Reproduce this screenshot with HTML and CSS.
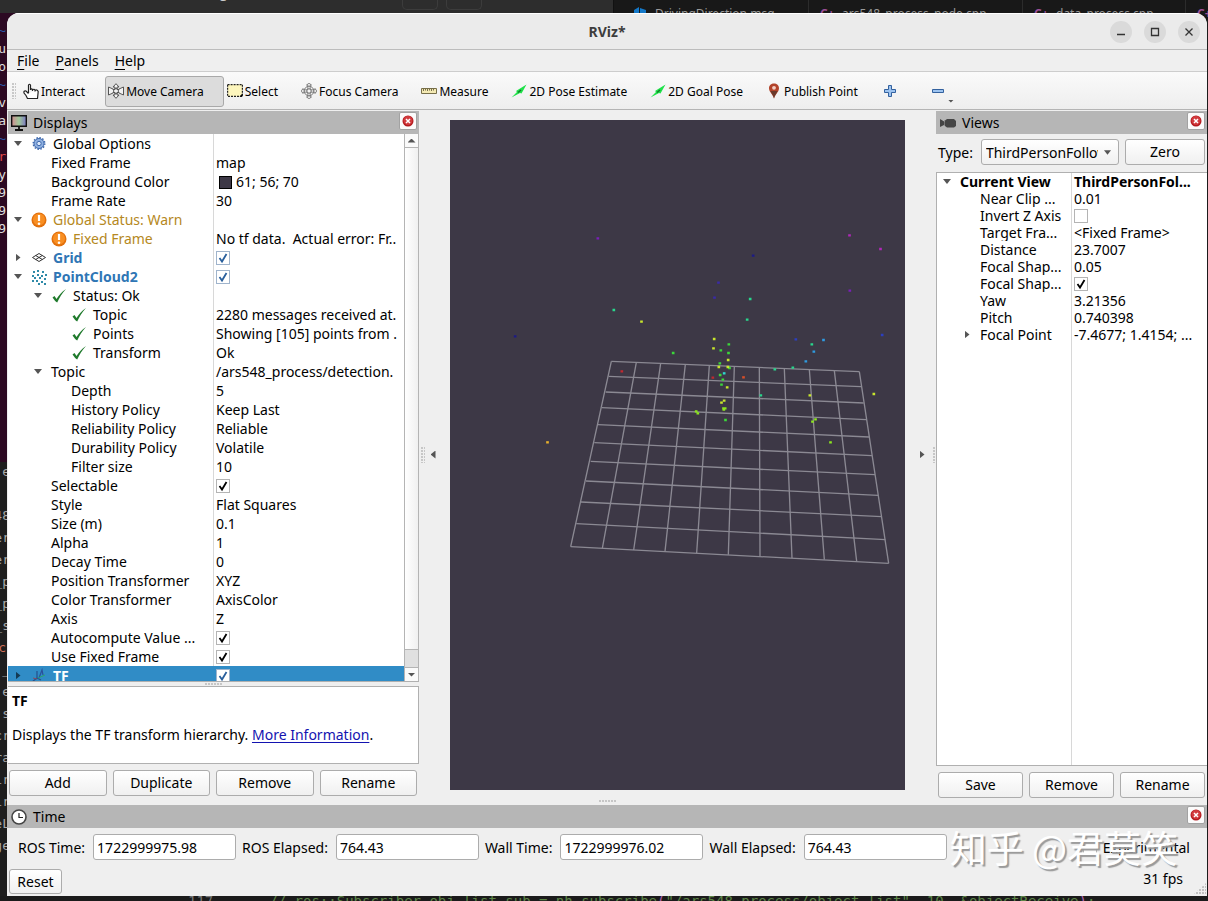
FILE: index.html
```html
<!DOCTYPE html>
<html lang="en">
<head>
<meta charset="utf-8">
<title>RViz*</title>
<link rel="stylesheet" href="styles.css">
</head>
<body>
<svg class="defs" aria-hidden="true">
  <symbol id="i-check" viewBox="0 0 16 16"><path d="M1.500 9.500 3.500 8l2 3C8 7 10.500 4 15 1 11 5.500 8.500 9.500 6.200 14.500 4.500 14 3.500 12 1.500 9.500Z" fill="#1f7a2c"/></symbol>
  <symbol id="i-warn" viewBox="0 0 16 16"><circle cx="8" cy="8" r="7.500" fill="#e2700c"/><circle cx="8" cy="7.500" r="6" fill="#f88e22"/><path d="M8 3v6" stroke="#fff" stroke-width="2.200"/><circle cx="8" cy="11.800" r="1.300" fill="#fff"/></symbol>
  <symbol id="i-x" viewBox="0 0 12 12"><circle cx="6" cy="6" r="5.500" fill="#b3181c"/><circle cx="6" cy="5.500" r="4.500" fill="#d23b3e"/><path d="m4 4 4 4M8 4 4 8" stroke="#fff" stroke-width="1.500"/></symbol>
  <symbol id="i-arrow" viewBox="0 0 16 16"><path d="M.5 14.500 6 9 5 8 15.500 1.500 10.500 10.500 9 10 .5 14.500Z" fill="#1fe24a"/><path d="M7 9.500 10 7" stroke="#137a26" stroke-width="1.500"/></symbol>
</svg>
<div class="desktop">
  <div class="behind-top">
    <div class="browser"><span class="at">@</span><span class="chip"></span><span class="chip"></span></div>
    <div class="tab msg"><svg class="tabicon" viewBox="0 0 14 14"><path d="M1 4 6 1v12L1 10ZM7 2l6 2v7l-6 2Z" fill="#1478c8"/></svg>DrivingDirection.msg</div>
    <div class="tab cpp"><b>C+</b>ars548_process_node.cpp</div>
    <div class="tab cpp last"><b>C+</b>data_process.cpp</div>
    <div class="tab cpp"><b>C+</b></div>
  </div>
  <div class="behind-left">
    <div class="term"><i>~</i><span>u</span><span>o</span><i>~</i><span>v</span><span>a</span><i>~</i><em>r</em><span>y</span><span>9</span><span>9</span><span>9</span></div>
    <div class="code"><span>e</span><span></span><span>48</span><span>er</span><span>er</span><span>_p</span><span>_p</span><span>_s</span><em>c</em><span>_</span><span>e</span><span>s</span><span>cr</span><span>ra</span><span>ir</span><span>ir</span><span>eL</span><span>ge</span></div>
  </div>

  <main class="window">
    <header class="titlebar">
      <h1>RViz*</h1>
      <div class="winbtns">
        <button aria-label="Minimize"><svg viewBox="0 0 22 22"><path d="M7 13.500h8"/></svg></button>
        <button aria-label="Maximize"><svg viewBox="0 0 22 22"><path d="M7.500 7.500h7v7h-7z"/></svg></button>
        <button aria-label="Close window"><svg viewBox="0 0 22 22"><path d="m7.500 7.500 7 7m0-7-7 7"/></svg></button>
      </div>
    </header>
    <nav class="menubar"><button><u>F</u>ile</button><button><u>P</u>anels</button><button><u>H</u>elp</button></nav>
    <div class="toolbar">
      <span class="grip tall"></span>
      <button class="tool"><svg viewBox="0 0 16 16"><path d="M5.500 10V2Q6.500.5 7.500 2V7M7.500 6.500Q9 5 9.500 7V8M9.500 7Q11 5.500 12 7V8.500M12 7.500Q14 6 15.200 8.500L14.500 15.500H4.500L3 12.500 1 10Q.5 7.500 3 8L5.500 10.500" fill="#fff" stroke="#222" stroke-width="1.200"/></svg>Interact</button>
      <button class="tool on"><svg viewBox="0 0 16 16"><path d="M8 .7 11 4H9v2.500h2V6l4.500-2v8L11 10v-.5H9V12h2l-3 3.300L5 12h2V9.500H5V10L.5 12V4L5 6v.5h2V4H5Z" fill="#f2f2f2" stroke="#555"/><circle cx="8" cy="8" r="2.500" fill="none" stroke="#555"/></svg>Move Camera</button>
      <button class="tool"><svg viewBox="0 0 16 16"><path d="M.6 1.600h14.800v11.800H.6z" fill="#fdf6bd" stroke="#222" stroke-width="1.200" stroke-dasharray="2 1"/><path d="m15.500 10.500-3 3h3z" fill="#000"/></svg>Select</button>
      <button class="tool"><svg viewBox="0 0 16 16"><g fill="none" stroke="#777"><circle cx="8" cy="8" r="4.800"/><circle cx="8" cy="8" r="2.300"/><path d="M6.800 6.800V2H5.500L8 .3 10.500 2H9.200v4.800H14V5.500L15.700 8 14 10.500V9.200H9.200V14h1.300L8 15.700 5.500 14h1.300V9.200H2v1.300L.3 8 2 5.500v1.300Z" stroke-width=".9"/></g></svg>Focus Camera</button>
      <button class="tool"><svg viewBox="0 0 16 16"><path d="M.5 5.500h15v5H.5z" fill="#f4eab4" stroke="#776f4a"/><path d="M2.500 6v2m2-2v1.500m2-1.500v2m2-2v1.500m2-1.500v2m2-2v1.500" stroke="#554e30" stroke-width=".8"/></svg>Measure</button>
      <button class="tool"><svg viewBox="0 0 16 16"><use href="#i-arrow"/></svg>2D Pose Estimate</button>
      <button class="tool"><svg viewBox="0 0 16 16"><use href="#i-arrow"/></svg>2D Goal Pose</button>
      <button class="tool pin"><svg viewBox="0 0 16 16"><path d="M8 15.500C7 11.500 3 9 3 5.200 3 2.300 5.200.5 8 .5s5 1.800 5 4.700C13 9 9 11.500 8 15.500Z" fill="#b2432a"/><path d="M8 15.500C7.500 12 5 10 4.500 8h7c-.5 2-3 4-3.500 7.500Z" fill="#6b3a2c"/><circle cx="8" cy="4.800" r="1.900" fill="#f3cfc4"/></svg>Publish Point</button>
      <button class="tool icon" aria-label="Add tool"><svg viewBox="0 0 16 16"><path d="M6.500 2.500h3v4h4v3h-4v4h-3v-4h-4v-3h4z" fill="#9cc3f0" stroke="#33619e"/></svg></button>
      <button class="tool icon drop" aria-label="Remove tool"><svg viewBox="0 0 16 16"><path d="M2.500 6.500h11v3h-11z" fill="#9cc3f0" stroke="#33619e"/></svg><span class="dropmark"></span></button>
    </div>

    <div class="workspace">
      <section class="dock displays">
        <h2 class="docktitle"><svg viewBox="0 0 16 16"><defs><linearGradient id="scr"><stop offset="0" stop-color="#d08a90"/><stop offset=".5" stop-color="#9fc99a"/><stop offset="1" stop-color="#7b77c4"/></linearGradient></defs><path d="M.7.7h14.600v10.600H.7z" fill="url(#scr)" stroke="#111" stroke-width="1.400"/><path d="M8 11v3M4 15h8" stroke="#111" stroke-width="1.800"/></svg><span>Displays</span><button class="close" aria-label="Close Displays"><svg viewBox="0 0 12 12"><use href="#i-x"/></svg></button></h2>
        <div class="tree">
          <table class="props">
            <colgroup><col class="name"><col></colgroup>
            <tr><td><div class="cell"><i class="tw open"></i><svg viewBox="0 0 16 16"><circle cx="8" cy="7.500" r="5" fill="#8fb0e0" stroke="#3d68ad"/><circle cx="8" cy="7.500" r="5.800" fill="none" stroke="#3d68ad" stroke-width="1.400" stroke-dasharray="1.500 1.500"/><circle cx="8" cy="7.500" r="2.200" fill="#dbe8fa" stroke="#3d68ad"/></svg>Global Options</div></td><td></td></tr>
            <tr><td><div class="cell d1"><i class="tw"></i>Fixed Frame</div></td><td>map</td></tr>
            <tr><td><div class="cell d1"><i class="tw"></i>Background Color</div></td><td><span class="swatch"></span>61; 56; 70</td></tr>
            <tr><td><div class="cell d1"><i class="tw"></i>Frame Rate</div></td><td>30</td></tr>
            <tr class="warn"><td><div class="cell"><i class="tw open"></i><svg viewBox="0 0 16 16"><use href="#i-warn"/></svg>Global Status: Warn</div></td><td></td></tr>
            <tr class="warn"><td><div class="cell d1"><i class="tw"></i><svg viewBox="0 0 16 16"><use href="#i-warn"/></svg>Fixed Frame</div></td><td>No tf data.&nbsp; Actual error: Fr..</td></tr>
            <tr class="disp"><td><div class="cell"><i class="tw shut"></i><svg viewBox="0 0 16 16"><path d="m1.500 7.500 6.500-4 6.500 4-6.500 4Zm3.200-2 6.600 4m-3.300-6m3.300 2-6.600 4" fill="none" stroke="#333"/></svg><label for="c-grid">Grid</label></div></td><td><input type="checkbox" id="c-grid" class="blue" checked></td></tr>
            <tr class="disp"><td><div class="cell"><i class="tw open"></i><svg viewBox="0 0 16 16"><path d="M2 3h2m2-1h2m3 1h2M1 7h2m3-1h2m2 1h2m2-1h2M3 9h2m3 0h2m3 1h2M1 12h2m2 0h2m3 1h2M7 15h2m4 0h2" stroke="#2f8aa8" stroke-width="2"/></svg><label for="c-pc">PointCloud2</label></div></td><td><input type="checkbox" id="c-pc" class="blue" checked></td></tr>
            <tr><td><div class="cell d1"><i class="tw open"></i><svg viewBox="0 0 16 16"><use href="#i-check"/></svg>Status: Ok</div></td><td></td></tr>
            <tr><td><div class="cell d2"><i class="tw"></i><svg viewBox="0 0 16 16"><use href="#i-check"/></svg>Topic</div></td><td>2280 messages received at.</td></tr>
            <tr><td><div class="cell d2"><i class="tw"></i><svg viewBox="0 0 16 16"><use href="#i-check"/></svg>Points</div></td><td>Showing [105] points from .</td></tr>
            <tr><td><div class="cell d2"><i class="tw"></i><svg viewBox="0 0 16 16"><use href="#i-check"/></svg>Transform</div></td><td>Ok</td></tr>
            <tr><td><div class="cell d1"><i class="tw open"></i>Topic</div></td><td>/ars548_process/detection.</td></tr>
            <tr><td><div class="cell d2"><i class="tw"></i>Depth</div></td><td>5</td></tr>
            <tr><td><div class="cell d2"><i class="tw"></i>History Policy</div></td><td>Keep Last</td></tr>
            <tr><td><div class="cell d2"><i class="tw"></i>Reliability Policy</div></td><td>Reliable</td></tr>
            <tr><td><div class="cell d2"><i class="tw"></i>Durability Policy</div></td><td>Volatile</td></tr>
            <tr><td><div class="cell d2"><i class="tw"></i>Filter size</div></td><td>10</td></tr>
            <tr><td><div class="cell d1"><i class="tw"></i><label for="c-sel">Selectable</label></div></td><td><input type="checkbox" id="c-sel" checked></td></tr>
            <tr><td><div class="cell d1"><i class="tw"></i>Style</div></td><td>Flat Squares</td></tr>
            <tr><td><div class="cell d1"><i class="tw"></i>Size (m)</div></td><td>0.1</td></tr>
            <tr><td><div class="cell d1"><i class="tw"></i>Alpha</div></td><td>1</td></tr>
            <tr><td><div class="cell d1"><i class="tw"></i>Decay Time</div></td><td>0</td></tr>
            <tr><td><div class="cell d1"><i class="tw"></i>Position Transformer</div></td><td>XYZ</td></tr>
            <tr><td><div class="cell d1"><i class="tw"></i>Color Transformer</div></td><td>AxisColor</td></tr>
            <tr><td><div class="cell d1"><i class="tw"></i>Axis</div></td><td>Z</td></tr>
            <tr><td><div class="cell d1"><i class="tw"></i><label for="c-auto">Autocompute Value ...</label></div></td><td><input type="checkbox" id="c-auto" checked></td></tr>
            <tr><td><div class="cell d1"><i class="tw"></i><label for="c-fix">Use Fixed Frame</label></div></td><td><input type="checkbox" id="c-fix" checked></td></tr>
            <tr class="selected"><td><div class="cell"><i class="tw shut"></i><svg viewBox="0 0 16 16"><path d="m1 14 5-4V3M6 10l4 2" stroke="#24508c" fill="none" stroke-width="1.200"/><path d="m8 10 3-8 1 5" stroke="#2a4f9a" fill="none" stroke-width="1.200"/><path d="m7 10 7-3" stroke="#2ba36a"/><path d="m2 10 4 1" stroke="#8a4a5c"/></svg><label for="c-tf">TF</label></div></td><td><input type="checkbox" id="c-tf" class="blue" checked></td></tr>
          </table>
          <div class="scroll"><span class="up"></span><span class="track"></span><span class="rest"></span><span class="down"></span></div>
        </div>
        <div class="splitter"><span class="grip flat"></span></div>
        <div class="about"><b>TF</b><p>Displays the TF transform hierarchy. <a href="#tf">More Information</a>.</p></div>
        <div class="buttons"><button class="btn">Add</button><button class="btn">Duplicate</button><button class="btn">Remove</button><button class="btn">Rename</button></div>
      </section>

      <div class="collapse"><span class="grip"></span><i class="tw left"></i></div>
      <section class="scene" aria-label="3D view">
        <svg viewBox="-150 -300 1365 2010" preserveAspectRatio="xMidYMid meet">
          <g fill="none" stroke="#8b8993" stroke-width="4">
            <path d="M334 424 1078 455M326 469 1083 500M317 516 1091 549M306 563 1099 599M294 614 1107 651M283 668 1116 707M272 724 1125 764M258 783 1134 826M243 846 1145 890M229 911 1156 959M212 980 1166 1030"/>
            <path d="M334 424 212 980M409 427 307 985M482 430 401 990M556 433 495 994M628 436 590 999M703 440 685 1004M778 443 780 1009M853 446 876 1014M928 449 973 1019M1003 452 1070 1024M1078 455 1166 1030"/>
          </g>
          <g fill="none" stroke-width="7" stroke-linecap="square">
            <path stroke="#7a1fb8" d="M293 55h1M1049 212h1"/>
            <path stroke="#b028b8" d="M1048 46h1M1141 87h1"/>
            <path stroke="#1c1a86" d="M759 107h1M45 349h1"/>
            <path stroke="#3a2aa8" d="M655 188h1M643 233h1"/>
            <path stroke="#2c3fc0" d="M887 358h1M1146 345h1"/>
            <path stroke="#28d68c" d="M750 237h1M341 270h1M741 299h1M824 448h1M782 526h1M935 373h1M878 443h1"/>
            <path stroke="#2f9ae0" d="M970 360h1M941 395h1M917 424h1"/>
            <path stroke="#2fd6cc" d="M672 460h1"/>
            <path stroke="#3bd63a" d="M519 399h1M662 391h1M686 373h1M685 399h1M659 430h1M688 444h1M660 465h1M668 479h1M676 600h1M664 494h1"/>
            <path stroke="#c8e62c" d="M424 305h1M642 357h1M640 385h1M684 420h1M656 441h1M681 502h1M672 542h1M664 548h1M929 526h1M1121 522h1M683 441h1"/>
            <path stroke="#8ce61e" d="M588 574h1M593 580h1M670 565h1M675 565h1M671 569h1M937 605h1M946 598h1M991 667h1"/>
            <path stroke="#e8b02c" d="M142 667h1"/>
            <path stroke="#c02830" d="M365 454h1M638 473h1"/>
            <path stroke="#d84e28" d="M730 472h1"/>
          </g>
        </svg>
      </section>
      <div class="collapse right"><i class="tw rightw"></i><span class="grip"></span></div>

      <section class="dock views">
        <h2 class="docktitle"><svg viewBox="0 0 16 16"><path d="M0 4 5 7V5.500L7 4h7l2 2v5l-2 1.500H7L5 11V9.500L0 12Z" fill="#454545"/><path d="M4.500 5v6" stroke="#888" stroke-width=".7"/></svg><span>Views</span><button class="close" aria-label="Close Views"><svg viewBox="0 0 12 12"><use href="#i-x"/></svg></button></h2>
        <div class="typerow"><label for="type">Type:</label><select id="type"><option>ThirdPersonFollower (rviz_default_plugins)</option></select><button class="btn">Zero</button></div>
        <div class="tree">
          <table class="props">
            <colgroup><col class="name"><col></colgroup>
            <tr class="bold"><td><div class="cell"><i class="tw open"></i>Current View</div></td><td>ThirdPersonFol...</td></tr>
            <tr><td><div class="cell d1"><i class="tw"></i>Near Clip ...</div></td><td>0.01</td></tr>
            <tr><td><div class="cell d1"><i class="tw"></i><label for="c-inv">Invert Z Axis</label></div></td><td><input type="checkbox" id="c-inv"></td></tr>
            <tr><td><div class="cell d1"><i class="tw"></i>Target Fra...</div></td><td>&lt;Fixed Frame&gt;</td></tr>
            <tr><td><div class="cell d1"><i class="tw"></i>Distance</div></td><td>23.7007</td></tr>
            <tr><td><div class="cell d1"><i class="tw"></i>Focal Shap...</div></td><td>0.05</td></tr>
            <tr><td><div class="cell d1"><i class="tw"></i><label for="c-foc">Focal Shap...</label></div></td><td><input type="checkbox" id="c-foc" checked></td></tr>
            <tr><td><div class="cell d1"><i class="tw"></i>Yaw</div></td><td>3.21356</td></tr>
            <tr><td><div class="cell d1"><i class="tw"></i>Pitch</div></td><td>0.740398</td></tr>
            <tr><td><div class="cell d1"><i class="tw shut"></i>Focal Point</div></td><td>-7.4677; 1.4154; ...</td></tr>
          </table>
        </div>
        <div class="buttons"><button class="btn">Save</button><button class="btn">Remove</button><button class="btn">Rename</button></div>
      </section>
    </div>

    <div class="splitter big"><span class="grip flat"></span></div>
    <section class="time">
      <h2 class="docktitle"><svg viewBox="0 0 16 16"><circle cx="8" cy="8" r="7" fill="#fff" stroke="#444" stroke-width="1.600"/><path d="M8 4v4.500h4" fill="none" stroke="#222" stroke-width="1.200"/></svg><span>Time</span><button class="close" aria-label="Close Time"><svg viewBox="0 0 12 12"><use href="#i-x"/></svg></button></h2>
      <div class="fields">
        <label for="rt">ROS Time:</label><input type="text" id="rt" value="1722999975.98">
        <label for="re">ROS Elapsed:</label><input type="text" id="re" value="764.43">
        <label for="wt">Wall Time:</label><input type="text" id="wt" value="1722999976.02">
        <label for="we">Wall Elapsed:</label><input type="text" id="we" value="764.43">
        <label class="exp"><input type="checkbox">Experimental</label>
      </div>
      <div class="status"><button class="btn reset">Reset</button><span>31 fps</span></div>
      <span class="sizegrip"></span>
      <div class="watermark">知乎 @君莫笑</div>
    </section>
  </main>
  <div class="behind-bottom"><span class="ln">117</span><span class="cm">// ros::Subscriber obj_list_sub = nh_subscribe<b>(</b>"/ars548_process/object_list"<b>,</b> 10, &amp;objectReceive<b>)</b>;</span></div>
</div>
</body>
</html>
```

FILE: styles.css
```css
* { box-sizing: border-box; }
body { margin: 0; background: #1b1b1b; color: #000; font: 14px/19px "Noto Sans", "Open Sans", sans-serif; }
button, input, select { font: inherit; color: inherit; }
button { padding: 0; border: 0; background: none; }
.defs { display: none; }

.desktop { display: grid; grid-template: 13px minmax(0, 1fr) 5px / 7px minmax(0, 1fr) 1px; height: 100vh; overflow: hidden; background: #1b1b1b; }
.behind-top { grid-area: 1 / 1 / 2 / 4; display: flex; height: 26px; overflow: hidden; background: #181818; color: #9a9a9a; font-size: 12px; }
.browser { display: flex; flex: none; gap: 8px; width: 614px; padding-left: 218px; background: #2d2d2d; border-right: 1px solid #111; }
.browser .at { width: 176px; line-height: 4px; margin-top: -6px; color: #ccc; }
.chip { width: 36px; height: 10px; border: 1px solid #3c3c3c; border-top: 0; border-radius: 0 0 5px 5px; }
.tab { display: flex; flex: none; gap: 8px; width: 214px; padding: 4px 0 0 11px; white-space: nowrap; border-right: 1px solid #2c2c2c; }
.tab.msg { width: 195px; padding-left: 19px; }
.tab.last { width: 163px; }
.tab b { width: 14px; color: #9b4f96; }
.tabicon { width: 14px; height: 14px; margin-top: 2px; }
.behind-left { grid-area: 1 / 1 / 4 / 2; display: flex; flex-direction: column; width: 20px; color: #ddd; font-family: "DejaVu Sans Mono", monospace; font-size: 13px; }
.behind-left span, .behind-left i, .behind-left em { display: flex; justify-content: flex-end; width: 6px; font-style: normal; }
.term { display: grid; grid-auto-rows: 18px; height: 449px; margin-top: 13px; padding-top: 8px; background: #2c0922; }
.term i { color: #2a55a5; }
.term em { color: #e04848; }
.code { flex: 1; display: grid; grid-auto-rows: 22px; background: #1e1e1e; color: #aaa; }
.code span { width: 10px; }
.code em { color: #ce6e58; }
.behind-bottom { grid-area: 3 / 1 / 4 / 4; display: flex; align-items: flex-start; gap: 56px; padding-left: 188px; overflow: hidden; background: #1b1b1b; color: #5c8447; font: 14px/10px "DejaVu Sans Mono", monospace; white-space: pre; }
.behind-bottom .ln { color: #777; }
.behind-bottom b { color: #b060b0; font-weight: 400; }

.window { grid-area: 2 / 2 / 3 / 3; z-index: 1; display: flex; flex-direction: column; min-width: 0; overflow: hidden; border-radius: 12px 12px 0 0; background: #efefef; }
.titlebar { display: grid; grid-template-columns: 1fr auto 1fr; align-items: center; height: 37px; padding: 0 7px; border-top: 1px solid #fff; border-bottom: 1px solid #bcbcbc; background: #ebebeb; }
.titlebar h1 { grid-column: 2; margin: 0; color: #3d3d3d; font-size: 14px; line-height: 19px; }
.winbtns { display: flex; justify-content: flex-end; gap: 12px; }
.winbtns button { width: 22px; height: 22px; border-radius: 50%; background: #dadada; }
.winbtns svg { display: block; fill: none; stroke: #333; stroke-width: 1.3; }
.menubar { display: flex; gap: 16px; height: 22px; padding-left: 10px; border-bottom: 1px solid #cdcdcd; }
.menubar u { text-underline-offset: 3px; }
.toolbar { display: flex; align-items: center; flex: none; height: 38px; padding: 1px 0 0 5px; border-bottom: 1px solid #b4b4b4; background: linear-gradient(#fafafa, #eee); font-size: 12px; }
.tool { display: flex; align-items: center; gap: 2px; height: 31px; padding: 0 20px 0 3px; border: 1px solid transparent; border-left: 0; border-right: 0; white-space: nowrap; }
.tool svg { width: 16px; height: 16px; }
.tool.on { border: 1px solid #a9a9a9; border-radius: 3px; background: #dcdcdc; padding: 0 19px 0 2px; }
.tool.icon { padding: 0 16px 0 4px; }
.tool.drop { padding: 0 0 0 16px; }
.dropmark { align-self: flex-end; width: 6px; height: 3px; margin-bottom: 3px; background: #555; clip-path: polygon(0 0, 100% 0, 50% 100%); }

.grip { width: 4px; height: 16px; background: radial-gradient(circle at 1px 1px, #b8b8b8 0.6px, transparent 1px) 0 0 / 3px 3px; }
.grip.tall { margin-right: 4px; }
.grip.flat { width: 17px; height: 3px; }

.workspace { display: flex; flex: 1; min-height: 0; padding-top: 1px; }
.dock { display: flex; flex-direction: column; min-height: 0; }
.displays { width: 412px; padding-left: 1px; }
.views { width: 271px; }
.docktitle { display: flex; align-items: center; flex: none; height: 23px; margin: 0; padding: 0 2px 0 4px; background: #b6b6b6; font-size: 14px; font-weight: 400; }
.displays .docktitle { padding-left: 3px; }
.docktitle > svg { width: 16px; height: 16px; }
.docktitle span { flex: 1; padding-left: 6px; }
.close { display: grid; place-items: center; align-self: flex-start; width: 18px; height: 18px; margin-top: 1px; border: 1px solid #a2a2a2; border-radius: 2px; background: #fbfbfb; }
.close svg { width: 12px; height: 12px; }

.tree { display: flex; flex: 1; min-height: 0; overflow: hidden; border-bottom: 1px solid #b0b0b0; background: linear-gradient(#d8d8d8, #d8d8d8) 205px 0 / 1px 100% no-repeat #fff; }
.props { flex: 1; width: 0; table-layout: fixed; border-collapse: collapse; align-self: flex-start; }
.props .name { width: 205px; }
.props td { height: 19px; padding: 0; overflow: hidden; white-space: nowrap; line-height: 19px; }
.props td + td { padding-left: 3px; }
.cell { display: flex; align-items: center; height: 19px; }
.cell svg { flex: none; width: 16px; height: 16px; margin-right: 6px; }
.d1 { padding-left: 20px; }
.d2 { padding-left: 40px; }
.tw { flex: none; display: grid; place-items: center; width: 20px; margin-right: 3px; }
.tw::before { width: 8px; height: 8px; background: #555; }
.tw.open::before { content: ""; height: 5px; clip-path: polygon(0 0, 100% 0, 50% 100%); }
.tw.shut::before, .tw.rightw::before { content: ""; width: 5px; clip-path: polygon(0 0, 100% 50%, 0 100%); }
.tw.left::before { content: ""; width: 5px; clip-path: polygon(100% 0, 0 50%, 100% 100%); }
.warn .cell { color: #b58822; }
.disp .cell { color: #2f76b5; font-weight: 700; }
.bold { font-weight: 700; }
.selected { background: #308cc6; }
.selected .cell { color: #fff; font-weight: 700; }
.selected .tw::before { background: #143a54; }
.swatch { display: inline-block; width: 13px; height: 13px; margin: 0 4px 0 3px; border: 1px solid #000; background: #3d3846; vertical-align: -2px; }
input[type=checkbox] { display: block; appearance: none; width: 14px; height: 14px; margin: 0; border: 1px solid #b4b4b4; background: #fff; }
input[type=checkbox]:checked { background: #fff url("data:image/svg+xml,%3Csvg xmlns='http://www.w3.org/2000/svg' viewBox='0 0 12 12'%3E%3Cpath d='M2.500 6 5 9.500 9.500 2' fill='none' stroke='%23000' stroke-width='1.800'/%3E%3C/svg%3E"); }
input.blue:checked { border-color: #a0b4cc; background-image: url("data:image/svg+xml,%3Csvg xmlns='http://www.w3.org/2000/svg' viewBox='0 0 12 12'%3E%3Cpath d='M2.500 6 5 9.500 9.500 2' fill='none' stroke='%23295f9c' stroke-width='1.800'/%3E%3C/svg%3E"); }

.scroll { display: flex; flex-direction: column; width: 15px; border: 1px solid #b4b4b4; border-top: 0; border-bottom: 0; background: #fafafa; }
.up, .down { display: grid; place-items: center; height: 14px; border-bottom: 1px solid #b4b4b4; }
.down { border: 0; border-top: 1px solid #b4b4b4; }
.up::before, .down::before { content: ""; width: 8px; height: 4px; background: #555; clip-path: polygon(50% 0, 100% 100%, 0 100%); }
.down::before { clip-path: polygon(0 0, 100% 0, 50% 100%); }
.track { flex: 1; background: linear-gradient(90deg, #fff, #f0f0f0); }
.rest { height: 18px; border-top: 1px solid #b4b4b4; background: #e0e0e0; }

.splitter { display: grid; place-items: center; flex: none; height: 4px; }
.splitter.big { height: 7px; }
.about { height: 78px; flex: none; padding: 4px; border: 1px solid #b0b0b0; border-left: 0; background: #fff; }
.about p { margin: 15px 0 0; white-space: nowrap; }
.about a { color: #1313b0; text-underline-offset: 2px; }
.buttons { display: flex; gap: 6px; flex: none; padding: 6px 2px 2px 1px; }
.btn { flex: 1; height: 26px; border: 1px solid #acacac; border-radius: 3px; background: linear-gradient(#fff, #f0f0f0); line-height: 24px; }

.collapse { display: flex; align-items: center; gap: 0; width: 31px; padding-left: 2px; }
.collapse .tw { width: 16px; margin: 0; }
.collapse.right { padding-left: 9px; }
.collapse.right .grip { margin-left: 3px; }
.scene { flex: 1; min-width: 0; margin: 9px 0 8px; background: #3d3846; }
.scene svg { display: block; width: 100%; height: 100%; }

.typerow { display: flex; align-items: center; gap: 6px; flex: none; height: 36px; margin-bottom: 2px; padding: 0 2px; }
.typerow label { margin-right: 2px; }
.typerow select { width: 138px; height: 26px; padding: 0 20px 0 4px; border: 1px solid #acacac; border-radius: 3px; appearance: none; text-overflow: clip; overflow: hidden; background: url("data:image/svg+xml,%3Csvg xmlns='http://www.w3.org/2000/svg' viewBox='0 0 8 5'%3E%3Cpath d='M0 0h8L4 5z' fill='%23555'/%3E%3C/svg%3E") right 7px center / 7px 5px no-repeat, linear-gradient(#fff, #f0f0f0); }
.views .tree { border: 1px solid #b0b0b0; border-right: 0; background-position: 134px 0; }
.views .name { width: 134px; }
.views .props td, .views .cell { height: 17px; line-height: 17px; }
.views .buttons { padding: 6px 2px 0; }

.time { position: relative; flex: none; padding-bottom: 2px; }
.fields { display: flex; align-items: center; gap: 6px; padding: 6px 17px 0 11px; white-space: nowrap; }
.fields label { margin-right: 2px; }
.fields input[type=text] { flex: 1; min-width: 0; height: 26px; padding: 0 3px; border: 1px solid #acacac; border-radius: 3px; background: #fff; }
.fields .exp { display: flex; align-items: center; gap: 6px; margin: 0; padding-left: 130px; }
.status { display: flex; justify-content: space-between; padding: 9px 24px 0 2px; }
.reset { flex: none; width: 53px; height: 25px; }
.sizegrip { position: absolute; right: 1px; bottom: 1px; width: 13px; height: 12px; background: radial-gradient(circle at 1px 1px, #b0b0b0 0.6px, transparent 1px) 0 0 / 3px 3px; clip-path: polygon(100% 0, 100% 100%, 0 100%); }
.watermark { position: absolute; right: 29px; bottom: 23px; color: #fff; font: 400 37px/52px "Noto Sans CJK SC", sans-serif; text-shadow: 2px 2px 1px #999; white-space: nowrap; }
```
